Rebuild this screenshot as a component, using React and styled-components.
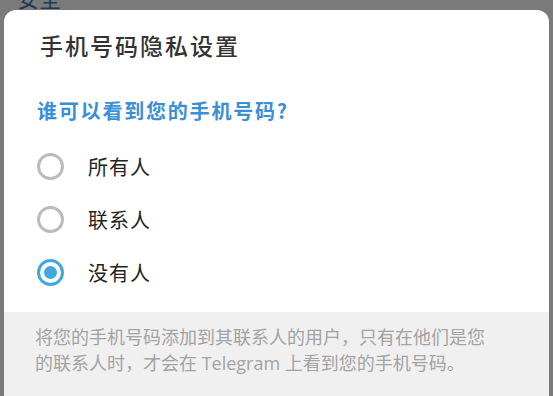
import React, { useState } from "react";
import styled, { createGlobalStyle } from "styled-components";

const Global = createGlobalStyle`
  html, body {
    margin: 0;
    padding: 0;
    height: 100%;
    overflow: hidden;
  }
  body {
    font-family: "Noto Sans CJK SC", "Open Sans", "Noto Sans", sans-serif;
    background: #7a7a7a;
  }
`;

const Backdrop = styled.div`
  position: relative;
  height: 396px;
  background: #7a7a7a;
  padding: 10px 4px 0;
  box-sizing: border-box;
  overflow: hidden;
`;

const BehindTitle = styled.div`
  position: absolute;
  top: -16px;
  left: 17px;
  font-size: 22px;
  line-height: 26px;
  color: #203a55;
`;

const Dialog = styled.div`
  position: relative;
  background: #fff;
  border-radius: 12px 12px 0 0;
  display: flex;
  flex-direction: column;
  height: 420px;
  overflow: hidden;
`;

const Title = styled.h2`
  margin: 0;
  padding: 22px 36px 0;
  font-size: 23px;
  line-height: 26px;
  font-weight: 500;
  letter-spacing: 2px;
  color: #333;
`;

const Section = styled.div`
  padding: 41px 33px 13px;
`;

const Question = styled.div`
  font-size: 20px;
  line-height: 24px;
  font-weight: 700;
  letter-spacing: 1.8px;
  color: #3a8fd6;
  margin-bottom: 17px;
`;

const Option = styled.label`
  display: flex;
  align-items: center;
  gap: 24px;
  height: 53px;
  cursor: pointer;
`;

const Circle = styled.span`
  width: 27px;
  height: 27px;
  box-sizing: border-box;
  border-radius: 50%;
  border: 3px solid ${(p) => (p.$on ? "#40a7e3" : "#bbbbbb")};
  display: flex;
  align-items: center;
  justify-content: center;
  flex-shrink: 0;

  &::after {
    content: "";
    width: 13px;
    height: 13px;
    border-radius: 50%;
    background: #40a7e3;
    display: ${(p) => (p.$on ? "block" : "none")};
  }
`;

const OptionText = styled.span`
  font-size: 20px;
  letter-spacing: 1px;
  color: #222;
`;

const Footer = styled.div`
  flex: 1;
  background: #f0f0f0;
  padding: 12px 54px 0 31px;
  font-size: 18px;
  line-height: 26px;
  letter-spacing: 0;
  color: #a3a3a3;
  font-family: "Open Sans", "Noto Sans CJK SC", sans-serif;
`;

const options = ["所有人", "联系人", "没有人"];

export default function App() {
  const [sel, setSel] = useState(2);
  return (
    <>
      <Global />
      <Backdrop>
        <BehindTitle>安全</BehindTitle>
        <Dialog>
          <Title>手机号码隐私设置</Title>
          <Section>
            <Question>谁可以看到您的手机号码?</Question>
            {options.map((o, i) => (
              <Option key={o} onClick={() => setSel(i)}>
                <Circle $on={sel === i} />
                <OptionText>{o}</OptionText>
              </Option>
            ))}
          </Section>
          <Footer>
            将您的手机号码添加到其联系人的用户，只有在他们是您的联系人时，才会在 Telegram 上看到您的手机号码。
          </Footer>
        </Dialog>
      </Backdrop>
    </>
  );
}
